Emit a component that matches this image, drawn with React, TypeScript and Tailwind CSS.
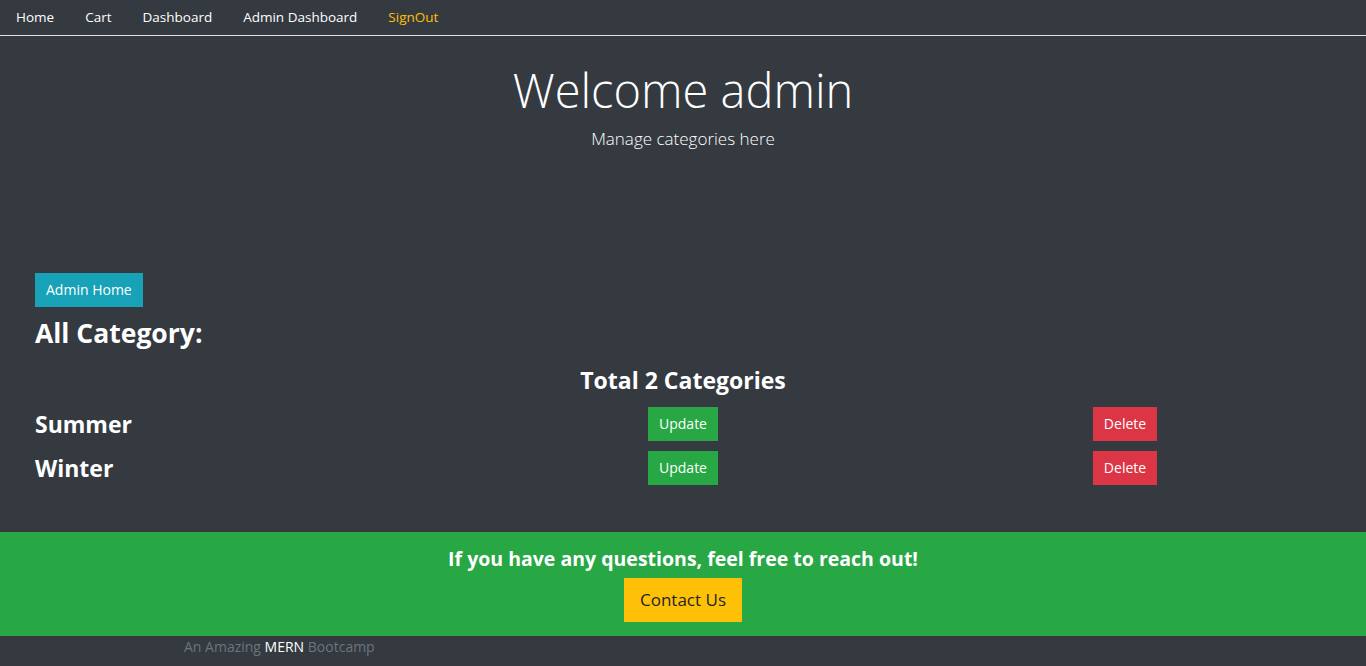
import React from "react";

const font = { fontFamily: '"Open Sans", "Noto Sans", sans-serif' };

const navLinks = [
  { label: "Home", active: false },
  { label: "Cart", active: false },
  { label: "Dashboard", active: false },
  { label: "Admin Dashboard", active: false },
  { label: "SignOut", active: true },
];

const categories = ["Summer", "Winter"];

export default function App() {
  return (
    <div className="min-h-[666px] bg-[#343a40] text-white" style={font}>
      {/* nav */}
      <nav className="flex h-[36px] items-center border-b border-[#dee2e6] pl-[16px]">
        {navLinks.map((l) => (
          <a
            key={l.label}
            className={`mr-[31px] text-[13.5px] ${l.active ? "text-[#ffc107]" : "text-white"}`}
          >
            {l.label}
          </a>
        ))}
      </nav>

      {/* jumbotron */}
      <div className="flex flex-col items-center pt-[22px]">
        <h1 className="text-[47px] font-light leading-[64px]">Welcome admin</h1>
        <p className="mt-[5px] text-[17px] font-light leading-[24px]">Manage categories here</p>
      </div>

      {/* content */}
      <div className="mt-[122px] px-[35px]">
        <button className="bg-[#17a2b8] px-[11px] text-[14px] leading-[34px] text-white">
          Admin Home
        </button>
        <h2 className="mt-[8px] text-[26.5px] font-bold leading-[36px]">All Category:</h2>
        <h3 className="mt-[13px] text-center text-[23px] font-bold leading-[32px]">
          Total 2 Categories
        </h3>
        <div className="mt-[11px] flex flex-col gap-[10px] pb-[47px]">
          {categories.map((c) => (
            <div key={c} className="grid grid-cols-3 gap-[30px]">
              <div className="text-[23px] font-bold leading-[34px]">{c}</div>
              <div className="flex justify-center">
                <button className="bg-[#28a745] px-[11px] text-[14px] leading-[34px] text-white">
                  Update
                </button>
              </div>
              <div className="flex justify-center">
                <button className="bg-[#dc3545] px-[11px] text-[14px] leading-[34px] text-white">
                  Delete
                </button>
              </div>
            </div>
          ))}
        </div>
      </div>

      {/* footer */}
      <footer>
        <div className="flex flex-col items-center bg-[#28a745] pt-[12px] pb-[14px]">
          <h4 className="text-[19.5px] font-bold leading-[30px]">
            If you have any questions, feel free to reach out!
          </h4>
          <button className="mt-[4px] bg-[#ffc107] px-[16px] text-[17px] leading-[44px] text-[#212529]">
            Contact Us
          </button>
        </div>
        <div className="pl-[184px] text-[14px] leading-[22px] text-[#6c757d]">
          An Amazing <span className="text-white">MERN</span> Bootcamp
        </div>
      </footer>
    </div>
  );
}
